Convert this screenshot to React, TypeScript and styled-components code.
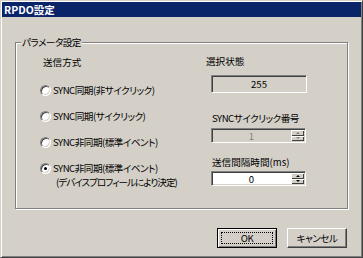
import React from "react";
import styled, { createGlobalStyle } from "styled-components";

const GlobalStyle = createGlobalStyle`
  html, body {
    margin: 0;
    padding: 0;
    background: #d4d0c8;
  }
  body {
    font-family: "Noto Sans CJK JP", "Liberation Sans", sans-serif;
    font-size: 9.6px;
    font-feature-settings: "palt" 1;
    letter-spacing: -0.5px;
    color: #000;
  }
`;

const Window = styled.div`
  box-sizing: border-box;
  width: 363px;
  height: 258px;
  display: flex;
  flex-direction: column;
  background: #d4d0c8;
  border: 1px solid;
  border-color: #d4d0c8 #404040 #404040 #d4d0c8;
  box-shadow: inset 1px 1px 0 #fff, inset -1px -1px 0 #808080;
  padding: 1px;
`;

const TitleBar = styled.div`
  height: 15px;
  display: flex;
  align-items: center;
  padding-left: 2px;
  background: #0a246a;
  color: #fff;
  font-weight: bold;
  font-size: 10.5px;
  letter-spacing: 0;
  line-height: 15px;
`;

const Body = styled.div`
  flex: 1;
  display: flex;
  flex-direction: column;
  padding: 25px 13px 0 13px;
`;

const Group = styled.div`
  position: relative;
  box-sizing: border-box;
  height: 167px;
  border: 1px solid #808080;
  box-shadow: inset 1px 1px 0 #fff, 1px 1px 0 #fff;
  display: grid;
  grid-template-columns: 190px 1fr;
`;

const Legend = styled.span`
  position: absolute;
  top: -7px;
  left: 5px;
  padding: 0 1px;
  line-height: 13px;
  background: #d4d0c8;
`;

const Column = styled.div<{ $inset?: number }>`
  display: flex;
  flex-direction: column;
  align-items: flex-start;
  padding-left: ${(p) => p.$inset ?? 0}px;
`;

const Label = styled.div<{ $top: number; $indent?: number; $spacing?: number }>`
  margin-top: ${(p) => p.$top}px;
  margin-left: ${(p) => p.$indent ?? 0}px;
  letter-spacing: ${(p) => p.$spacing ?? -0.5}px;
  line-height: 14px;
  height: 14px;
  white-space: nowrap;
`;

const RadioList = styled.div`
  margin-top: 14px;
  display: flex;
  flex-direction: column;
  gap: 12px;
`;

const RadioRow = styled.div`
  display: flex;
  align-items: flex-start;
  gap: 2px;
  line-height: 14px;
  white-space: nowrap;
`;

const RadioCircle = styled.span<{ $checked?: boolean }>`
  box-sizing: border-box;
  flex: none;
  width: 11px;
  height: 11px;
  margin-top: 2px;
  border-radius: 50%;
  background: #fff;
  border: 1px solid;
  border-color: #808080 #fff #fff #808080;
  box-shadow: inset 1px 1px 0 #404040, inset -1px -1px 0 #d4d0c8;
  display: flex;
  align-items: center;
  justify-content: center;
  &::after {
    content: "";
    width: 3px;
    height: 3px;
    border-radius: 50%;
    background: ${(p) => (p.$checked ? "#000" : "transparent")};
  }
`;

const RadioText = styled.div`
  display: flex;
  flex-direction: column;
`;

const SubLine = styled.span`
  padding-left: 3px;
  letter-spacing: -1px;
`;

const Sunken = styled.div<{ $top: number; $width: number; $height: number; $bg: string }>`
  box-sizing: border-box;
  margin-top: ${(p) => p.$top}px;
  margin-left: 5px;
  width: ${(p) => p.$width}px;
  height: ${(p) => p.$height}px;
  background: ${(p) => p.$bg};
  border: 1px solid;
  border-color: #808080 #fff #fff #808080;
  box-shadow: inset 1px 1px 0 #404040, inset -1px -1px 0 #d4d0c8;
  display: flex;
  align-items: stretch;
`;

const FieldText = styled.div<{ $disabled?: boolean }>`
  flex: 1;
  display: flex;
  align-items: center;
  justify-content: center;
  color: ${(p) => (p.$disabled ? "#808080" : "#000")};
  letter-spacing: 0;
  line-height: 12px;
`;

const SpinButtons = styled.div`
  width: 13px;
  padding: 1px 1px 1px 0;
  display: flex;
  flex-direction: column;
`;

const SpinButton = styled.div`
  flex: 1;
  box-sizing: border-box;
  background: #d4d0c8;
  box-shadow: inset 1px 1px 0 #fff, inset -1px -1px 0 #404040;
  display: flex;
  align-items: center;
  justify-content: center;
`;

const Arrow = styled.span<{ $down?: boolean; $disabled?: boolean }>`
  width: 0;
  height: 0;
  border-left: 2px solid transparent;
  border-right: 2px solid transparent;
  ${(p) => (p.$down ? "border-top" : "border-bottom")}: 2px solid ${(p) => (p.$disabled ? "#808080" : "#000")};
`;

const ButtonRow = styled.div`
  margin-top: 19px;
  display: flex;
  justify-content: flex-end;
  gap: 10px;
  padding-right: 1px;
`;

const Button = styled.button<{ $default?: boolean }>`
  position: relative;
  box-sizing: border-box;
  width: 60px;
  height: 20px;
  padding: 0;
  font: inherit;
  font-feature-settings: "palt" 1;
  letter-spacing: -0.5px;
  color: #000;
  background: #d4d0c8;
  border: 1px solid;
  border-color: ${(p) => (p.$default ? "#000" : "#fff #404040 #404040 #fff")};
  box-shadow: ${(p) =>
    p.$default
      ? "inset 1px 1px 0 #fff, inset -1px -1px 0 #808080"
      : "inset -1px -1px 0 #808080"};
  &::after {
    content: "";
    display: ${(p) => (p.$default ? "block" : "none")};
    position: absolute;
    inset: 3px;
    border: 1px dotted #000;
  }
`;

function Spin({ value, top, disabled }: { value: string; top: number; disabled?: boolean }) {
  return (
    <Sunken $top={top} $width={95} $height={15} $bg={disabled ? "#d4d0c8" : "#fff"}>
      <FieldText $disabled={disabled}>{value}</FieldText>
      <SpinButtons>
        <SpinButton>
          <Arrow $disabled={disabled} />
        </SpinButton>
        <SpinButton>
          <Arrow $down $disabled={disabled} />
        </SpinButton>
      </SpinButtons>
    </Sunken>
  );
}

const options = [
  { label: "SYNC同期(非サイクリック)" },
  { label: "SYNC同期(サイクリック)" },
  { label: "SYNC非同期(標準イベント)" },
  { label: "SYNC非同期(標準イベント)", sub: "(デバイスプロフィールにより決定)", checked: true },
];

export default function App() {
  return (
    <>
      <GlobalStyle />
      <Window>
        <TitleBar>RPDO設定</TitleBar>
        <Body>
          <Group>
            <Legend>パラメータ設定</Legend>
            <Column $inset={24}>
              <Label $top={12} $indent={3} $spacing={0}>送信方式</Label>
              <RadioList>
                {options.map((o, i) => (
                  <RadioRow key={i}>
                    <RadioCircle $checked={o.checked} />
                    <RadioText>
                      <span>{o.label}</span>
                      {o.sub && <SubLine>{o.sub}</SubLine>}
                    </RadioText>
                  </RadioRow>
                ))}
              </RadioList>
            </Column>
            <Column>
              <Label $top={11} $spacing={0}>選択状態</Label>
              <Sunken $top={7} $width={96} $height={18} $bg="#d4d0c8">
                <FieldText>255</FieldText>
              </Sunken>
              <Label $top={18} $indent={6}>SYNCサイクリック番号</Label>
              <Spin value="1" top={3} disabled />
              <Label $top={12} $indent={6} $spacing={0}>送信間隔時間(ms)</Label>
              <Spin value="0" top={2} />
            </Column>
          </Group>
          <ButtonRow>
            <Button $default>OK</Button>
            <Button>キャンセル</Button>
          </ButtonRow>
        </Body>
      </Window>
    </>
  );
}
